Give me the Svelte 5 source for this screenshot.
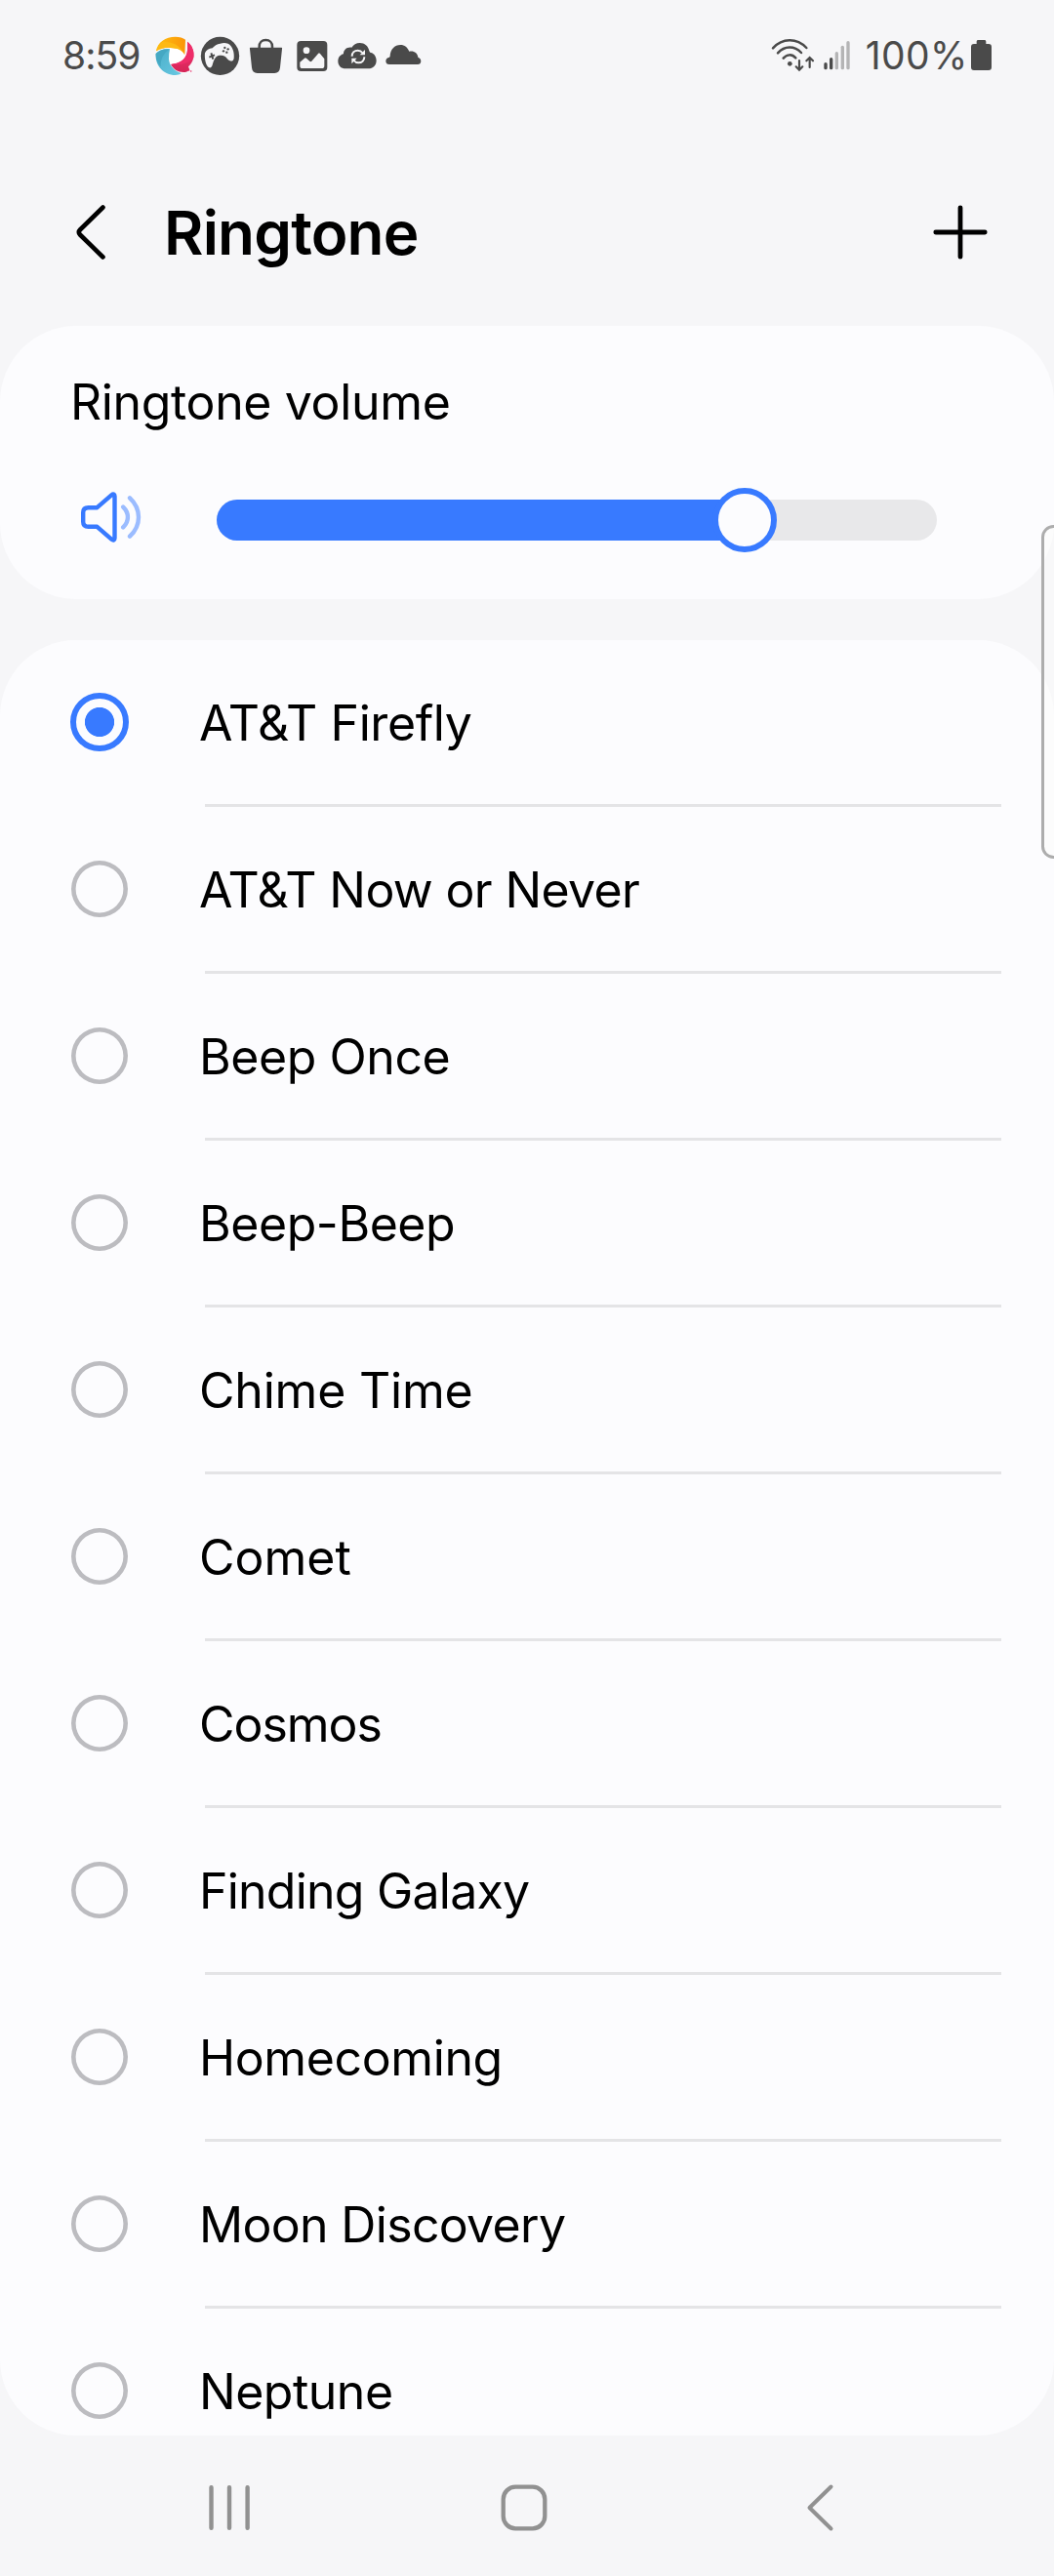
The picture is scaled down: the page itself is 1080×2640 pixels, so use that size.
<script>
  // spacing is the letter spacing of each label, in pixels
  const ringtones = [
    { name: 'AT&T Firefly', spacing: -0.4 },
    { name: 'AT&T Now or Never', spacing: -0.64 },
    { name: 'Beep Once', spacing: -0.43 },
    { name: 'Beep-Beep', spacing: -0.45 },
    { name: 'Chime Time', spacing: -0.2 },
    { name: 'Comet', spacing: 0 },
    { name: 'Cosmos', spacing: -1.04 },
    { name: 'Finding Galaxy', spacing: -0.77 },
    { name: 'Homecoming', spacing: -0.39 },
    { name: 'Moon Discovery', spacing: -0.68 },
    { name: 'Neptune', spacing: -0.5 }
  ];
  let selected = $state('AT&T Firefly');
  let volume = $state(73.3);
  const signal = [
    { x: 223, top: 132, on: true },
    { x: 240, top: 117, on: true },
    { x: 257, top: 99, on: false },
    { x: 275, top: 80, on: false },
    { x: 292, top: 66, on: false }
  ];
</script>

<div class="screen">
  <div class="status">
    <span class="time">8:59</span>
    <div class="notifications">
      <svg viewBox="320 51 136 120" width="45.33" height="40">
        <defs>
          <linearGradient id="gold" x1="0" x2="1"><stop offset="0" stop-color="#fdc010" /><stop offset="1" stop-color="#fb9508" /></linearGradient>
          <linearGradient id="rose" x1="0" x2="0" y2="1"><stop offset="0" stop-color="#f43a78" /><stop offset="1" stop-color="#d62456" /></linearGradient>
          <linearGradient id="aqua" x1="0" x2="1" y2="1"><stop offset="0" stop-color="#48adc8" /><stop offset="1" stop-color="#69c8e2" /></linearGradient>
        </defs>
        <circle cx="387" cy="113" r="34" fill="#fff" />
        <path fill="url(#gold)" d="M329 97C333 70 358 53 388 53c13 0 24 4 31 9l-2 47c-8-15-20-20-36-21-20-4-36 0-52 9z" />
        <path fill="#fdb913" d="M329 97c4-13 11-23 20-29 28 0 54 9 68 41-8-15-20-20-36-21-20-4-36 0-52 9z" />
        <path fill="url(#rose)" d="M425 68c15 11 22 30 19 49-3 14-10 22-16 28l4 10c-5 4-12 7-19 7-17 0-31-9-39-24 24-2 44-12 50-36 2-10 2-22 1-34z" />
        <path fill="#ee2d69" d="M425 68c15 11 22 30 19 49-14 17-38 25-69 20 24-2 43-12 49-35 2-10 2-22 1-34z" />
        <path fill="url(#aqua)" d="M371 91c-17-2-33 3-43 14-3 36 24 66 60 66 7 0 13-2 18-5-22-8-37-24-38-45 0-11 1-21 3-30z" />
        <path fill="#45a8c3" d="M371 91c-17-2-33 3-43 14 0 17 7 31 15 40-1-22 8-41 28-54z" />
        <path fill="#ec4f80" d="M426 157h6v2h-6zm8 0h4v4h-4z" />
      </svg>
      <svg viewBox="456 51 144 120" width="48" height="40">
        <circle cx="526.500" cy="112" r="59" fill="#4a4a4a" />
        <path fill="#f6f6f8" d="M480 103c4-9 12-14 23-15 6-7 14-13 24-14 8-3 16-3 24 0 14 6 20 28 18 45-1 7-6 10-12 8-7-2-10-11-16-14-6-3-14-3-22-1-8 4-12 14-15 24-2 9-5 14-11 12-11-4-15-31-13-45z" />
        <path d="M493 116l17-7M499 103l6 19" stroke="#4a4a4a" stroke-width="6" />
        <g fill="#4a4a4a"><circle cx="541" cy="87" r="3.500" /><circle cx="551" cy="91" r="3.500" /><circle cx="537" cy="97" r="3.500" /><circle cx="547" cy="101" r="3.500" /></g>
      </svg>
      <svg viewBox="600 51 140 120" width="46.67" height="40">
        <path d="M647 92V83c0-12 8-20 20-20s20 8 20 20v9" fill="none" stroke="#4a4a4a" stroke-width="7.500" />
        <path fill="#4a4a4a" d="M621 86h93c3 0 4 2 3 5l-6 57c-1 11-7 17-17 17h-53c-10 0-16-6-17-17l-6-57c-1-3 0-5 3-5z" />
      </svg>
      <svg viewBox="740 51 134 120" width="44.67" height="40">
        <rect x="762" y="66" width="93" height="93" rx="12" fill="#4a4a4a" />
        <circle cx="791" cy="95" r="10" fill="#f6f6f8" />
        <path fill="#f6f6f8" d="M771 131l14-12c2-2 4-2 6 0l10 9c2 2 4 2 6 0l20-23c2-2 4-2 6 0l13 16v22c0 4-3 7-7 7h-61c-4 0-7-3-7-7z" />
      </svg>
      <svg viewBox="874 51 146 120" width="48.67" height="40">
        <path fill="#4a4a4a" d="M914 151c-15 0-24-10-24-23 0-11 7-20 17-22 0-13 10-22 25-20 6-9 14-14 25-14 15 0 26 9 29 24 1 3 2 5 5 6 10 2 17 12 17 24 0 15-10 25-25 25z" />
        <g fill="none" stroke="#f6f6f8" stroke-width="6"><path d="M933 113c0-11 8-18 18-18 6 0 11 3 14 7" /><path d="M971 115c0 11-8 18-18 18-6 0-11-3-14-7" /></g>
        <path fill="#f6f6f8" d="M973 93v16h-16zM932 136v-17h16z" />
      </svg>
      <svg viewBox="1020 51 140 120" width="46.67" height="40">
        <path fill="#4a4a4a" d="M1047 138c-7 0-11-4-11-10s4-11 11-12c2-1 2-2 2-4 1-20 14-34 32-34 13 0 22 8 27 20 14-3 26 5 27 18 6 2 9 6 9 12s-4 10-10 10z" />
      </svg>
    </div>
    <div class="system">
      <svg viewBox="60 51 256 120" width="85.33" height="40">
        <g fill="none" stroke="#4a4a4a" stroke-width="7.500" stroke-linecap="round">
          <path d="M66 88c29-32 73-32 103-1" />
          <path d="M81 103c21-23 51-23 72-1" />
          <path d="M98 119c11-13 27-13 38-1" />
          <path d="M147 126v28M137 145l10 10 10-10M179 147v-28M169 127l10-10 10 10" stroke-width="6.500" />
        </g>
        <circle cx="118" cy="136" r="7" fill="#4a4a4a" />
        {#each signal as bar}
          <rect x={bar.x} y={bar.top} width="10" height={154 - bar.top} rx="5" fill={bar.on ? '#4a4a4a' : '#b4b4b5'} />
        {/each}
      </svg>
      <span class="percent">100%</span>
      <svg viewBox="672 51 69 120" width="23" height="40">
        <path fill="#4a4a4a" d="M697 63h19c3 0 5 2 5 5v7h8c6 0 9 3 9 9v63c0 6-3 9-9 9h-45c-6 0-9-3-9-9V84c0-6 3-9 9-9h8v-7c0-3 2-5 5-5z" />
      </svg>
    </div>
  </div>

  <header>
    <svg viewBox="0 0 36 60" width="36" height="60">
      <path d="M29.500 4.500L6 27.500q-2.500 2.500 0 5l23.500 23" fill="none" stroke="#000" stroke-width="4.600" stroke-linecap="round" />
    </svg>
    <h1>Ringtone</h1>
    <svg viewBox="0 0 56 56" width="56" height="56">
      <path d="M28 2.800v50.400M2.800 28h50.400" stroke="#000" stroke-width="4.800" stroke-linecap="round" />
    </svg>
  </header>

  <section class="card volume">
    <h2>Ringtone volume</h2>
    <div class="control">
      <svg viewBox="80 500 68 60" width="68" height="60">
        <g fill="none" stroke-width="4.400" stroke-linecap="round" stroke-linejoin="round">
          <path stroke="#387aff" d="M99.500 520.200l15-13c1.500-1.200 3-.7 3 1.300v43c0 2-1.500 2.500-3 1.300l-15-13h-9c-3.500 0-5.300-1.800-5.300-5v-9.600c0-3.200 1.800-5 5.300-5z" />
          <path stroke="#9bbcff" d="M126.200 519.600c6.300 6 6.300 14.800 0 20.800M133 510.300c12 11.200 12 28.200 0 39.400" />
        </g>
      </svg>
      <div class="track">
        <div class="fill" style="width:{volume}%"><span class="thumb"></span></div>
      </div>
    </div>
  </section>

  <section class="card list">
    {#each ringtones as tone}
      <div class="row">
        <span class="radio" class:checked={selected === tone.name}></span>
        <span class="label" style="letter-spacing:{tone.spacing}px">{tone.name}</span>
      </div>
      <div class="divider"></div>
    {/each}
  </section>

  <nav>
    <svg viewBox="0 0 48 52" width="48" height="52">
      <path d="M5.500 5.300v41.400M24 5.300v41.400M42.600 5.300v41.400" stroke="#919191" stroke-width="4.400" stroke-linecap="round" />
    </svg>
    <svg viewBox="0 0 52 52" width="52" height="52">
      <rect x="4.700" y="4.700" width="42.600" height="42.600" rx="12.500" fill="none" stroke="#919191" stroke-width="4.300" />
    </svg>
    <svg viewBox="0 0 36 52" width="36" height="52">
      <path d="M28.500 4.500L6.500 26l22 21.500" fill="none" stroke="#919191" stroke-width="4" stroke-linecap="round" stroke-linejoin="round" />
    </svg>
  </nav>

  <aside class="edge-handle"></aside>
</div>

<style>
  :global(body) { margin: 0; background: #f6f6f8; }
  .screen {
    position: relative;
    width: 1080px;
    height: 2640px;
    overflow: hidden;
    background: #f6f6f8;
    color: #000;
    font-family: Inter, Roboto, sans-serif;
  }
  svg { display: block; flex: none; }
  .status {
    display: flex;
    box-sizing: border-box;
    height: 198px;
    padding: 37px 63px 0 64px;
    color: #4a4a4a;
    font-size: 39px;
    line-height: 40px;
  }
  .time { width: 92.700px; letter-spacing: -0.9px; }
  .notifications { display: flex; }
  .system { display: flex; margin-left: auto; }
  .percent { width: 107.300px; margin-left: 11.400px; letter-spacing: 0.4px; }
  header {
    display: flex;
    align-items: center;
    height: 80px;
    padding: 0 68px 0 76px;
  }
  h1 {
    flex: 1;
    margin: 2px 0 0 56px;
    font-size: 62px;
    font-weight: 600;
    line-height: 80px;
    letter-spacing: -0.8px;
  }
  .card { background: #fcfcfe; border-radius: 78px; overflow: hidden; }
  .volume {
    box-sizing: border-box;
    height: 280px;
    margin-top: 56px;
    padding: 48px 120px 0 72px;
  }
  h2 {
    margin: 0;
    font-size: 50px;
    font-weight: 400;
    line-height: 60px;
    letter-spacing: -0.36px;
  }
  .control { display: flex; align-items: center; height: 66px; margin-top: 58px; }
  .control svg { margin: -6px 74px 0 8px; }
  .track { flex: 1; height: 42px; border-radius: 21px; background: #e8e8ea; }
  .fill {
    display: flex;
    align-items: center;
    justify-content: flex-end;
    height: 42px;
    border-radius: 21px 0 0 21px;
    background: #387aff;
  }
  .thumb {
    box-sizing: border-box;
    flex: none;
    width: 66px;
    height: 66px;
    margin-right: -33px;
    border: 6px solid #387aff;
    border-radius: 50%;
    background: #fcfcfe;
  }
  .list { height: 1840px; margin-top: 42px; }
  .row { display: flex; align-items: center; height: 168px; padding-left: 72px; }
  .radio {
    box-sizing: border-box;
    flex: none;
    width: 58px;
    height: 58px;
    margin: 0 73px 0 1px;
    border-radius: 50%;
    box-shadow: inset 0 0 0 4.600px #bcbcc0;
  }
  .radio.checked {
    width: 60px;
    height: 60px;
    margin: 0 72px 0 0;
    border: 6px solid #387aff;
    box-shadow: none;
    background: radial-gradient(circle, #387aff 14.700px, transparent 15.400px);
  }
  .label { padding-top: 2px; font-size: 50px; line-height: 60px; white-space: pre; }
  .divider { height: 3px; margin: 0 54px 0 210px; background: #e4e4e6; }
  nav {
    display: grid;
    grid-template-columns: 300px 312px 36px;
    align-items: center;
    box-sizing: border-box;
    height: 144px;
    padding: 4px 0 0 211px;
  }
  .edge-handle {
    position: absolute;
    top: 538px;
    right: -12px;
    box-sizing: border-box;
    width: 25px;
    height: 342px;
    border: 3px solid #adadad;
    border-radius: 13px;
    background: rgba(252, 252, 250, 0.4);
  }
</style>
